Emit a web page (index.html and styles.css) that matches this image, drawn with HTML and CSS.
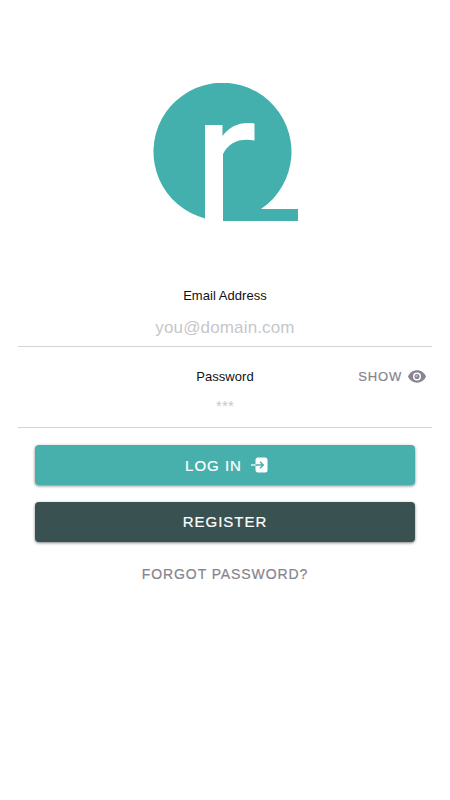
FILE: index.html
```
<!DOCTYPE html>
<html lang="en">
<head>
    <meta charset="UTF-8">
    <meta name="viewport" content="width=device-width, initial-scale=1.0">
    <title>Log In</title>
    <link rel="stylesheet" href="styles.css">
</head>
<body>

    <!-- Logo -->
    <div class="logo">
        <svg width="146" height="139" viewBox="0 0 146 139">
            <path fill="#43b0ad" d="M52 135.500 A69 69 0 1 1 108 126 H145 V138 H70 V71 C76 59 87 55 101.500 57.500 V40.500 C87 38.500 77 43 69.500 53 V42 H52 Z"/>
        </svg>
    </div>

    <!-- Login form -->
    <form class="login-form">
        <div class="field">
            <label class="field-label" for="email">Email Address</label>
            <input class="field-input" type="email" id="email" placeholder="you@domain.com">
        </div>
        <div class="field">
            <div class="field-top">
                <label class="field-label" for="password">Password</label>
                <button class="show-button" type="button">
                    <span>SHOW</span>
                    <svg width="18" height="13" viewBox="0 0 18 13">
                        <path fill="#868590" d="M0 6.500 C3.500 -1.700 14.500 -1.700 18 6.500 C14.500 14.700 3.500 14.700 0 6.500 Z"/>
                        <circle cx="9" cy="6.500" r="3.300" fill="#868590" stroke="#fff" stroke-width="1.500"/>
                        <circle cx="8.500" cy="6" r="1" fill="#c5c5ca"/>
                    </svg>
                </button>
            </div>
            <input class="field-input password-input" type="password" id="password" placeholder="***">
        </div>

        <!-- Buttons -->
        <div class="actions">
            <button class="button login-button" type="button">
                <span>LOG IN</span>
                <svg width="17" height="16" viewBox="0 0 17 16">
                    <rect x="4.500" y="0.500" width="12" height="15" rx="2.500" fill="#fff"/>
                    <path d="M0 8 H4.500" stroke="#fff" stroke-width="1.300"/>
                    <path d="M4.500 8 H12 M9 4.700 L12.300 8 L9 11.300" fill="none" stroke="#48b0ac" stroke-width="1.400"/>
                </svg>
            </button>
            <button class="button register-button" type="button">REGISTER</button>
            <a class="forgot-link" href="#">FORGOT PASSWORD?</a>
        </div>
    </form>

</body>
</html>
```
FILE: styles.css
```
/* Basic styling for the page */
* {
    box-sizing: border-box;
}
body {
    margin: 0;
    min-height: 800px;
    background-color: white;
    font-family: "Liberation Sans", Arial, sans-serif;
}
button {
    font-family: inherit;
    border: none;
    cursor: pointer;
}

/* Logo */
.logo {
    padding: 83px 0 0 153px;
    height: 266px;
}

/* Form fields */
.login-form {
    padding: 0 18px;
}
.field {
    height: 81px;
    padding-top: 20px;
    border-bottom: 1px solid #d2d4d5;
    display: flex;
    flex-direction: column;
    align-items: center;
}
.field-label {
    font-size: 13px;
    line-height: 19px;
    letter-spacing: 0.05px;
    color: #111;
}
.field-input {
    width: 100%;
    height: 30px;
    margin-top: 8px;
    padding: 0;
    border: none;
    outline: none;
    background: none;
    text-align: center;
    font-family: inherit;
    font-size: 17px;
    letter-spacing: 0.15px;
}
.field-input::placeholder {
    color: #c6c7ca;
}
.password-input {
    margin-top: 4px;
    font-size: 15px;
}

/* Password label with the show toggle on the right */
.field-top {
    width: 100%;
    display: grid;
    grid-template-columns: 1fr auto 1fr;
}
.field-top .field-label {
    grid-column: 2;
}
.show-button {
    justify-self: end;
    display: flex;
    align-items: center;
    gap: 6px;
    height: 18px;
    margin-right: 6px;
    padding: 0;
    background: none;
    color: #858490;
    font-size: 13px;
    letter-spacing: 0.8px;
    -webkit-text-stroke: 0.2px;
}

/* Buttons */
.actions {
    padding: 17px 17px 0;
    display: flex;
    flex-direction: column;
    align-items: center;
}
.button {
    width: 100%;
    height: 40px;
    margin-bottom: 17px;
    padding: 0;
    display: flex;
    justify-content: center;
    align-items: center;
    gap: 9px;
    border-radius: 4px;
    box-shadow: 0 1px 3px rgba(0, 0, 0, 0.5);
    color: white;
    font-size: 15px;
    letter-spacing: 1px;
    -webkit-text-stroke: 0.2px;
}
.login-button {
    padding-left: 3px;
    background-color: #48b0ac;
}
.register-button {
    padding-bottom: 1px;
    background-color: #3a5152;
}

/* Forgot password */
.forgot-link {
    margin-top: 5px;
    color: #858490;
    font-size: 14px;
    line-height: 20px;
    letter-spacing: 0.9px;
    text-decoration: none;
    -webkit-text-stroke: 0.2px;
}
```
